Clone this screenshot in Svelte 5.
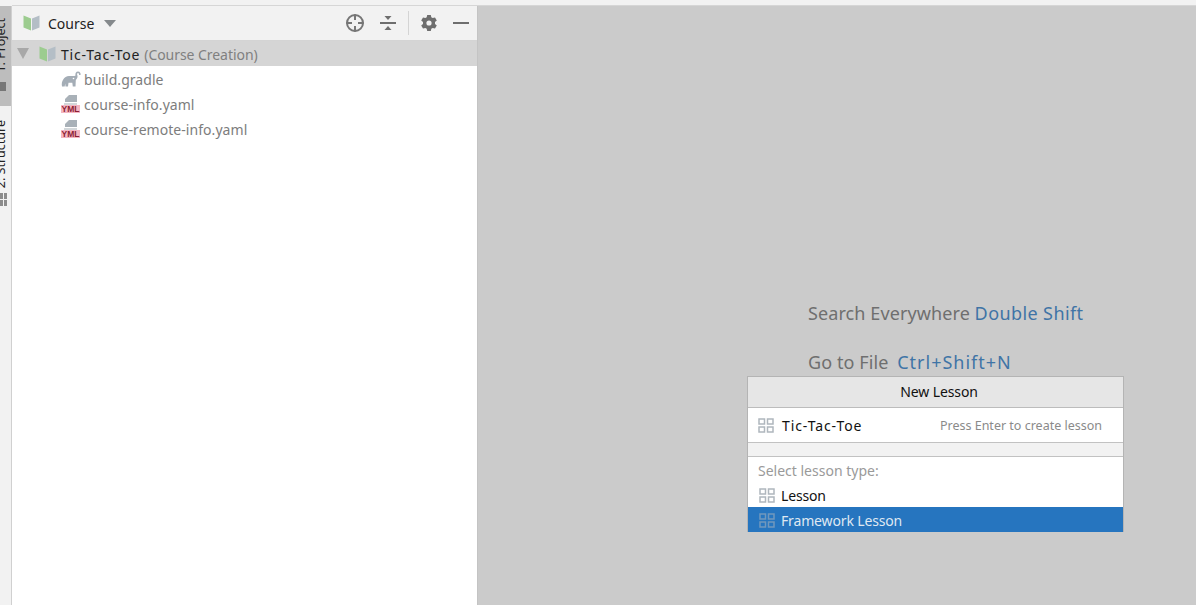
<script>
  const files = [
    { name: 'build.gradle', icon: 'gradle' },
    { name: 'course-info.yaml', icon: 'yml' },
    { name: 'course-remote-info.yaml', icon: 'yml' }
  ];
</script>

{#snippet book()}
  <svg class="book" width="17" height="16" viewBox="0 0 17 16">
    <path d="M0.500 0.500 L8 3.500 V15.500 L0.500 12.500 Z" fill="#9ccc8f" />
    <path d="M9 3.500 L16.500 0.500 V12.500 L9 15.500 Z" fill="#b4bec6" />
  </svg>
{/snippet}

{#snippet lessonIcon()}
  <svg class="grid-icon" width="16" height="15" viewBox="0 0 16 15" fill="none" stroke="#afb6bd" stroke-width="1.5">
    <rect x="1" y="1" width="5.500" height="5" />
    <rect x="9.500" y="1" width="5.500" height="5" />
    <rect x="1" y="9" width="5.500" height="5" />
    <rect x="9.500" y="9" width="5.500" height="5" />
  </svg>
{/snippet}

<div class="page">
  <aside class="stripe">
    <div class="tab active">
      <span class="vtext">1: Project</span>
      <span class="sq"></span>
    </div>
    <div class="tab second">
      <span class="vtext">2: Structure</span>
      <span class="dots"><i></i><i></i><i></i><i></i></span>
    </div>
  </aside>

  <section class="project">
    <header class="toolbar">
      {@render book()}
      <span class="title">Course</span>
      <svg class="caret" width="12" height="7" viewBox="0 0 12 7"><path d="M0 0 H12 L6 7 Z" fill="#85898c" /></svg>
      <span class="spacer"></span>
      <svg class="tool" width="20" height="20" viewBox="0 0 20 20" fill="none" stroke="#767676" stroke-width="2">
        <circle cx="10" cy="10" r="8" />
        <path d="M10 1.500 V7 M10 13 V18.500 M1.500 10 H7 M13 10 H18.500" />
      </svg>
      <svg class="tool collapse" width="18" height="18" viewBox="0 0 18 18" fill="#6e6e6e">
        <rect x="1" y="8" width="16" height="2" />
        <path d="M5.500 2 H12.500 L9 6 Z M5.500 16 H12.500 L9 12 Z" />
      </svg>
      <span class="divider"></span>
      <svg class="tool gear" width="18" height="18" viewBox="0 0 18 18">
        <path fill="#6e6e6e" fill-rule="evenodd" d="M7.200 1 H10.800 L11.300 3.300 L12.700 4.100 L15 3.400 L16.800 6.500 L15 8 V10 L16.800 11.500 L15 14.600 L12.700 13.900 L11.300 14.700 L10.800 17 H7.200 L6.700 14.700 L5.300 13.900 L3 14.600 L1.200 11.500 L3 10 V8 L1.200 6.500 L3 3.400 L5.300 4.100 L6.700 3.300 Z M9 6.400 A2.600 2.600 0 1 0 9 11.600 A2.600 2.600 0 1 0 9 6.400 Z" />
      </svg>
      <span class="minus"></span>
    </header>

    <div class="row selected">
      <svg class="arrow" width="12" height="11" viewBox="0 0 12 11"><path d="M0 0 H12 L6 11 Z" fill="#a8a8a8" /></svg>
      {@render book()}
      <span class="root">Tic-Tac-Toe</span>
      <span class="muted">(Course Creation)</span>
    </div>

    {#each files as file}
      <div class="row file">
        {#if file.icon === 'gradle'}
          <svg class="file-icon" width="20" height="16" viewBox="0 0 20 16">
            <path fill="#a4adb6" d="M1 15.500 C0 10 3 5.500 8 5 C11 4.700 13 5.500 14.500 4.500 C14 2.500 15 0.500 17 0.500 C19 0.500 20 2.500 19.500 4 L18 4 C18.300 3 17.800 2 17 2 C16 2 15.800 3.500 16.500 4.800 C17 6.500 15.500 8.500 14.800 9 L14.500 15.500 H11.800 L11.300 11.800 H7.500 L7 15.500 H4.500 L4.200 12.500 L3.700 15.500 Z" />
            <circle cx="12.500" cy="7.500" r="0.800" fill="#fff" />
          </svg>
        {:else}
          <span class="yml">
            <svg width="13" height="10" viewBox="0 0 13 10" class="doc">
              <path d="M5 0 H13 V7 H1 V4 Z" fill="#a9b1b8" />
              <rect x="0" y="8" width="13" height="2" fill="#d3d7da" />
            </svg>
            <span class="yml-tag">YML</span>
          </span>
        {/if}
        <span class="fname">{file.name}</span>
      </div>
    {/each}
  </section>

  <main class="editor">
    <div class="hints">
      <p><span class="hint-label">Search Everywhere</span> <b class="double">Double Shift</b></p>
      <p><span class="hint-label">Go to File</span> <b class="keys">Ctrl+Shift+N</b></p>
    </div>

    <div class="popup">
      <div class="popup-title">New Lesson</div>
      <div class="input-row">
        {@render lessonIcon()}
        <span class="input-text">Tic-Tac-Toe</span>
        <span class="advert">Press Enter to create lesson</span>
      </div>
      <div class="gap-band"></div>
      <div class="list">
        <div class="list-head">Select lesson type:</div>
        <div class="item">{@render lessonIcon()}<span class="lesson">Lesson</span></div>
        <div class="item current">{@render lessonIcon()}<span class="lesson">Framework Lesson</span></div>
      </div>
    </div>
  </main>
</div>

<style>
  :global(body) {
    margin: 0;
    background: #fff;
  }
  .page {
    position: relative;
    width: 1196px;
    height: 605px;
    overflow: hidden;
    display: grid;
    grid-template-columns: 12px 465px 1fr;
    box-sizing: border-box;
    padding-top: 6px;
    background: #f2f2f2;
    font-family: "Noto Sans", "Open Sans", sans-serif;
    font-size: 14px;
    color: #1e1e1e;
  }
  .page::before {
    content: "";
    position: absolute;
    left: 12px;
    right: 0;
    top: 5px;
    height: 1px;
    background: #d6d6d6;
  }
  .stripe {
    background: #f2f2f2;
    border-right: 1px solid #d0d0d0;
    box-sizing: border-box;
    overflow: hidden;
    display: flex;
    flex-direction: column;
    height: 599px;
  }
  .tab {
    display: flex;
    flex-direction: column;
    align-items: center;
    width: 11px;
    overflow: visible;
    position: relative;
  }
  .tab.active {
    background: #bdbdbd;
    height: 100px;
    flex: none;
  }
  .vtext {
    writing-mode: vertical-rl;
    transform: rotate(180deg);
    font-size: 12.500px;
    line-height: 16px;
    white-space: nowrap;
    color: #222;
    position: absolute;
    left: -7px;
  }
  .active .vtext {
    bottom: 33px;
  }
  .second .vtext {
    top: 14px;
  }
  .sq {
    position: absolute;
    left: 0;
    top: 76px;
    width: 6px;
    height: 9px;
    background: #767676;
  }
  .tab.second {
    flex: 1;
  }
  .dots {
    position: absolute;
    left: 0;
    top: 87px;
    width: 7px;
    display: grid;
    grid-template-columns: 3px 3px;
    gap: 1px;
  }
  .dots i {
    height: 6px;
    background: #8c8c8c;
  }
  .project {
    background: #fff;
    height: 599px;
  }
  .toolbar {
    height: 34px;
    background: #f2f2f2;
    border-bottom: 1px solid #d4d4d4;
    display: flex;
    align-items: center;
    padding: 0 8px 0 11px;
  }
  .title {
    margin-left: 8px;
    color: #222;
  }
  .caret {
    margin-left: 10px;
    margin-top: 1px;
  }
  .spacer {
    flex: 1;
  }
  .tool {
    flex: none;
  }
  .collapse {
    margin-left: 14px;
  }
  .divider {
    width: 1px;
    height: 24px;
    background: #d4d4d4;
    margin: 0 11px;
  }
  .minus {
    width: 16px;
    height: 2px;
    background: #6e6e6e;
    margin-left: 15px;
  }
  .row {
    height: 25px;
    display: flex;
    align-items: center;
    box-sizing: border-box;
    white-space: nowrap;
  }
  .selected {
    background: #d5d5d5;
    padding-left: 5px;
  }
  .selected .book {
    margin-left: 10px;
    margin-right: 5px;
  }
  .root {
    color: #222;
    letter-spacing: 0.8px;
    margin: 2px 0 0 0;
  }
  .muted {
    color: #808080;
    margin: 2px 0 0 4px;
    letter-spacing: -0.05px;
  }
  .file {
    padding-left: 48px;
    color: #7d7d7d;
  }
  .file-icon {
    margin: 0 3px 0 1px;
  }
  .fname {
    line-height: 25px;
    margin-top: 2px;
    letter-spacing: 0.05px;
  }
  .yml {
    position: relative;
    width: 20px;
    height: 18px;
    margin: 1px 3px 0 1px;
    display: block;
  }
  .doc {
    position: absolute;
    left: 3px;
    top: 0;
  }
  .yml-tag {
    position: absolute;
    left: 0;
    bottom: 0;
    width: 19px;
    height: 8px;
    background: #f4b5c1;
    color: #8c1f34;
    font-family: "Liberation Sans", sans-serif;
    font-size: 8.500px;
    font-weight: 700;
    line-height: 8px;
    text-align: center;
  }
  .editor {
    background: #cbcbcb;
    border-left: 1px solid #c4c4c4;
    height: 599px;
  }
  .hints {
    padding: 295px 0 0 330px;
    font-size: 18px;
    color: #6f6f6f;
  }
  .hints p {
    margin: 0 0 25px;
    height: 24px;
    line-height: 24px;
    white-space: nowrap;
  }
  .hint-label {
    letter-spacing: 0.1px;
  }
  .hints b {
    font-weight: 400;
    color: #3f74a6;
  }
  .double {
    letter-spacing: 0.4px;
  }
  .keys {
    letter-spacing: 1px;
    margin-left: 4px;
  }
  .popup {
    position: absolute;
    left: 747px;
    top: 376px;
    width: 377px;
    height: 156px;
    box-sizing: border-box;
    border: 1px solid #b4b4b4;
    background: #fff;
    display: flex;
    flex-direction: column;
  }
  .popup-title {
    height: 30px;
    flex: none;
    background: #e6e6e6;
    border-bottom: 1px solid #bcbcbc;
    text-align: center;
    line-height: 29px;
    color: #111;
    padding-left: 7px;
    letter-spacing: -0.1px;
  }
  .input-row {
    height: 34px;
    flex: none;
    border-bottom: 1px solid #c2c2c2;
    display: flex;
    align-items: center;
    padding: 0 21px 0 10px;
  }
  .input-text {
    margin-left: 8px;
    color: #111;
    letter-spacing: 0.9px;
  }
  .advert {
    margin-left: auto;
    color: #8a8a8a;
    font-size: 12.500px;
  }
  .gap-band {
    height: 13px;
    flex: none;
    background: #f2f2f2;
    border-bottom: 1px solid #c2c2c2;
  }
  .list {
    flex: 1;
    display: flex;
    flex-direction: column;
  }
  .list-head {
    height: 25px;
    flex: none;
    padding: 1px 0 0 10px;
    box-sizing: border-box;
    line-height: 25px;
    color: #9a9a9a;
  }
  .item {
    height: 25px;
    flex: none;
    box-sizing: border-box;
    padding-top: 2px;
    display: flex;
    align-items: center;
    gap: 6px;
    padding-left: 11px;
    color: #111;
  }
  .lesson {
    letter-spacing: -0.15px;
  }
  .item.current {
    background: #2675bf;
    color: #dfe8f2;
  }
  .item.current .grid-icon {
    opacity: 0.55;
  }
</style>
